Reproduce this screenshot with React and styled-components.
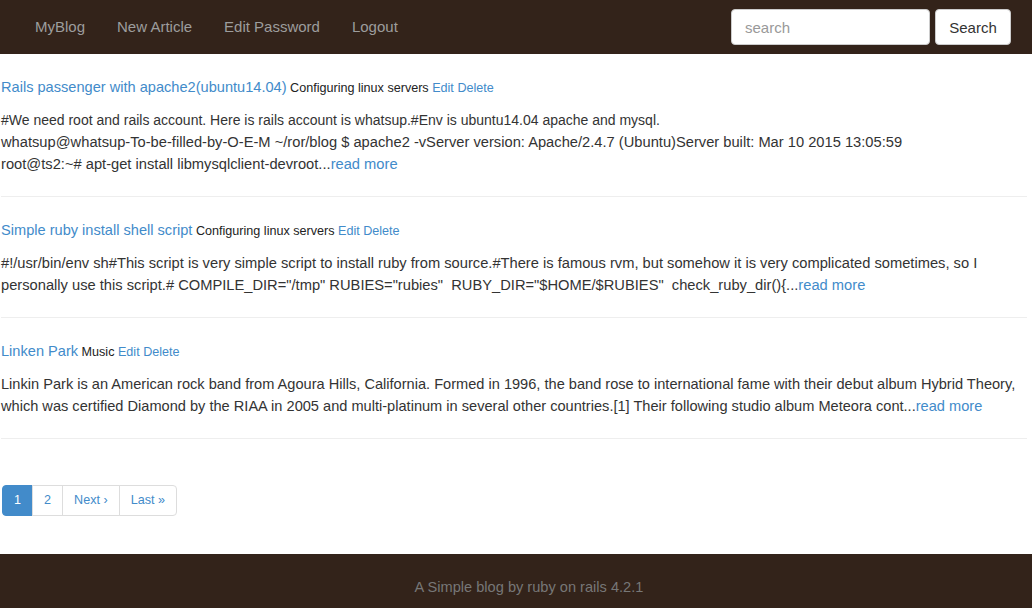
import React from "react";
import styled, { createGlobalStyle } from "styled-components";

const Global = createGlobalStyle`
  html, body { margin: 0; padding: 0; background: #fff; }
  body {
    font-family: "Liberation Sans", Arial, Helvetica, sans-serif;
    font-size: 14.6px;
    color: #333;
  }
  * { box-sizing: border-box; }
  a { color: #428bca; text-decoration: none; }
`;

const Page = styled.div`
  display: flex;
  flex-direction: column;
`;

const Navbar = styled.nav`
  height: 54px;
  background: #33231a;
  display: flex;
  align-items: center;
  justify-content: space-between;
  padding: 0 21px 0 19px;
`;

const NavLinks = styled.div`
  display: flex;
  align-items: center;
`;

const NavLink = styled.a`
  font-size: 15px;
  padding: 0 16px;
  line-height: 54px;
  && { color: #9d9d9d; }
`;

const SearchForm = styled.form`
  display: flex;
  gap: 5px;
  margin: 0;
`;

const SearchInput = styled.input`
  width: 199px;
  height: 36px;
  border: 1px solid #ccc;
  border-radius: 4px;
  padding: 6px 13px;
  font-family: inherit;
  font-size: 15px;
  color: #555;
  background: #fff;
  &::placeholder { color: #999; }
`;

const SearchButton = styled.button`
  height: 36px;
  width: 76px;
  border: 1px solid #ccc;
  border-radius: 4px;
  background: #fff;
  color: #333;
  font-family: inherit;
  font-size: 15px;
  padding: 0;
`;

const Content = styled.main`
  width: 1027px;
  padding-left: 1px;
`;

const Article = styled.article`
  border-bottom: 1px solid #eee;
  padding: 23px 0 21px;
`;

const TitleRow = styled.div`
  height: 22px;
  line-height: 22px;
  font-size: 12.6px;
  margin-bottom: 10px;
`;

const Title = styled.a`
  font-size: 14.6px;
  line-height: 1;
`;

const Meta = styled.span`
  color: #222;
`;

const Body = styled.p`
  margin: 0;
  line-height: 22px;
  font-size: ${(p) => (p.$size ? p.$size : "14.6px")};
`;

const Condensed = styled.span`
  font-size: 14px;
  line-height: 1;
`;

const Pagination = styled.ul`
  display: flex;
  list-style: none;
  margin: 46px 0 0 1px;
  padding: 0;
`;

const PageItem = styled.li`
  a {
    display: block;
    padding: 6px 11px;
    line-height: 17px;
    font-size: 12.6px;
    border: 1px solid #ddd;
    margin-left: -1px;
    background: ${(p) => (p.$active ? "#428bca" : "#fff")};
    border-color: ${(p) => (p.$active ? "#428bca" : "#ddd")};
    color: ${(p) => (p.$active ? "#fff" : "#428bca")};
  }
  &:first-child a { border-radius: 4px 0 0 4px; margin-left: 0; }
  &:last-child a { border-radius: 0 4px 4px 0; }
`;

const Footer = styled.footer`
  background: #33231a;
  color: #777;
  text-align: center;
  font-size: 14.6px;
  line-height: 20px;
  padding: 23px 0 23px 26px;
  margin-top: 38px;
`;

const articles = [
  {
    title: "Rails passenger with apache2(ubuntu14.04)",
    cat: "Configuring linux servers",
    size: "14.7px",
    lead: "#We need root and rails account. Here is rails account is whatsup.#Env is ubuntu14.04 apache and mysql.",
    lines: [
      "whatsup@whatsup-To-be-filled-by-O-E-M ~/ror/blog $ apache2 -vServer version: Apache/2.4.7 (Ubuntu)Server built: Mar 10 2015 13:05:59",
      "root@ts2:~# apt-get install libmysqlclient-devroot...",
    ],
  },
  {
    title: "Simple ruby install shell script",
    cat: "Configuring linux servers",
    size: "14.7px",
    lines: [
      '#!/usr/bin/env sh#This script is very simple script to install ruby from source.#There is famous rvm, but somehow it is very complicated sometimes, so I personally use this script.# COMPILE_DIR="/tmp" RUBIES="rubies" \u00a0RUBY_DIR="$HOME/$RUBIES" \u00a0check_ruby_dir(){...',
    ],
  },
  {
    title: "Linken Park",
    cat: "Music",
    lines: [
      "Linkin Park is an American rock band from Agoura Hills, California. Formed in 1996, the band rose to international fame with their debut album Hybrid Theory, which was certified Diamond by the RIAA in 2005 and multi-platinum in several other countries.[1] Their following studio album Meteora cont...",
    ],
  },
];

export default function App() {
  return (
    <Page>
      <Global />
      <Navbar>
        <NavLinks>
          <NavLink href="#">MyBlog</NavLink>
          <NavLink href="#">New Article</NavLink>
          <NavLink href="#">Edit Password</NavLink>
          <NavLink href="#">Logout</NavLink>
        </NavLinks>
        <SearchForm onSubmit={(e) => e.preventDefault()}>
          <SearchInput placeholder="search" />
          <SearchButton type="submit">Search</SearchButton>
        </SearchForm>
      </Navbar>
      <Content>
        {articles.map((a) => (
          <Article key={a.title}>
            <TitleRow>
              <Title href="#">{a.title}</Title> <Meta>{a.cat}</Meta>{" "}
              <a href="#">Edit</a> <a href="#">Delete</a>
            </TitleRow>
            <Body $size={a.size}>
              {a.lead && (
                <>
                  <Condensed>{a.lead}</Condensed>
                  <br />
                </>
              )}
              {a.lines.map((l, i) => (
                <React.Fragment key={i}>
                  {i > 0 && <br />}
                  {l}
                </React.Fragment>
              ))}
              <a href="#">read more</a>
            </Body>
          </Article>
        ))}
        <Pagination>
          <PageItem $active><a href="#">1</a></PageItem>
          <PageItem><a href="#">2</a></PageItem>
          <PageItem><a href="#">Next ›</a></PageItem>
          <PageItem><a href="#">Last »</a></PageItem>
        </Pagination>
      </Content>
      <Footer>A Simple blog by ruby on rails 4.2.1</Footer>
    </Page>
  );
}
